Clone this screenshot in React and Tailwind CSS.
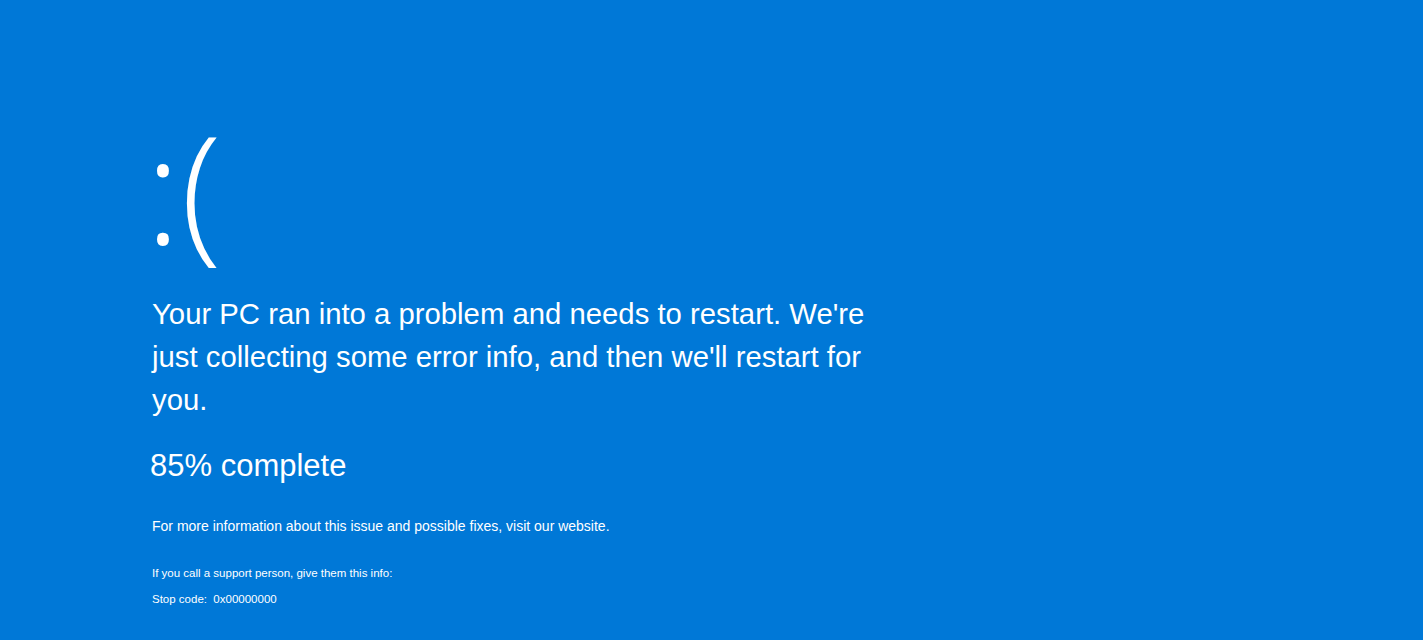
export default function App() {
  return (
    <div className="min-h-screen w-full bg-[#0078d7] text-white font-['Liberation_Sans',Arial,sans-serif] overflow-hidden">
      <div className="flex flex-col pl-[152px] pt-[101px]">
        <div className="h-[170px] text-[150px] leading-[170px] font-light font-['Open_Sans','Liberation_Sans',sans-serif] -ml-[7px]">
          :(
        </div>
        <p className="mt-[21px] w-[725px] text-[29.3px] leading-[43px]">
          Your PC ran into a problem and needs to restart. We're just collecting some error info, and then we'll restart for you.
        </p>
        <div className="mt-[25px] -ml-[2px] text-[31px] leading-[40px]">85% complete</div>
        <p className="mt-[31px] text-[14px] leading-[18px]">
          For more information about this issue and possible fixes, visit our website.
        </p>
        <div className="mt-[31px] flex flex-col gap-[11px] text-[11.5px] leading-[15px]">
          <span>If you call a support person, give them this info:</span>
          <span>Stop code:&nbsp; 0x00000000</span>
        </div>
      </div>
    </div>
  );
}
